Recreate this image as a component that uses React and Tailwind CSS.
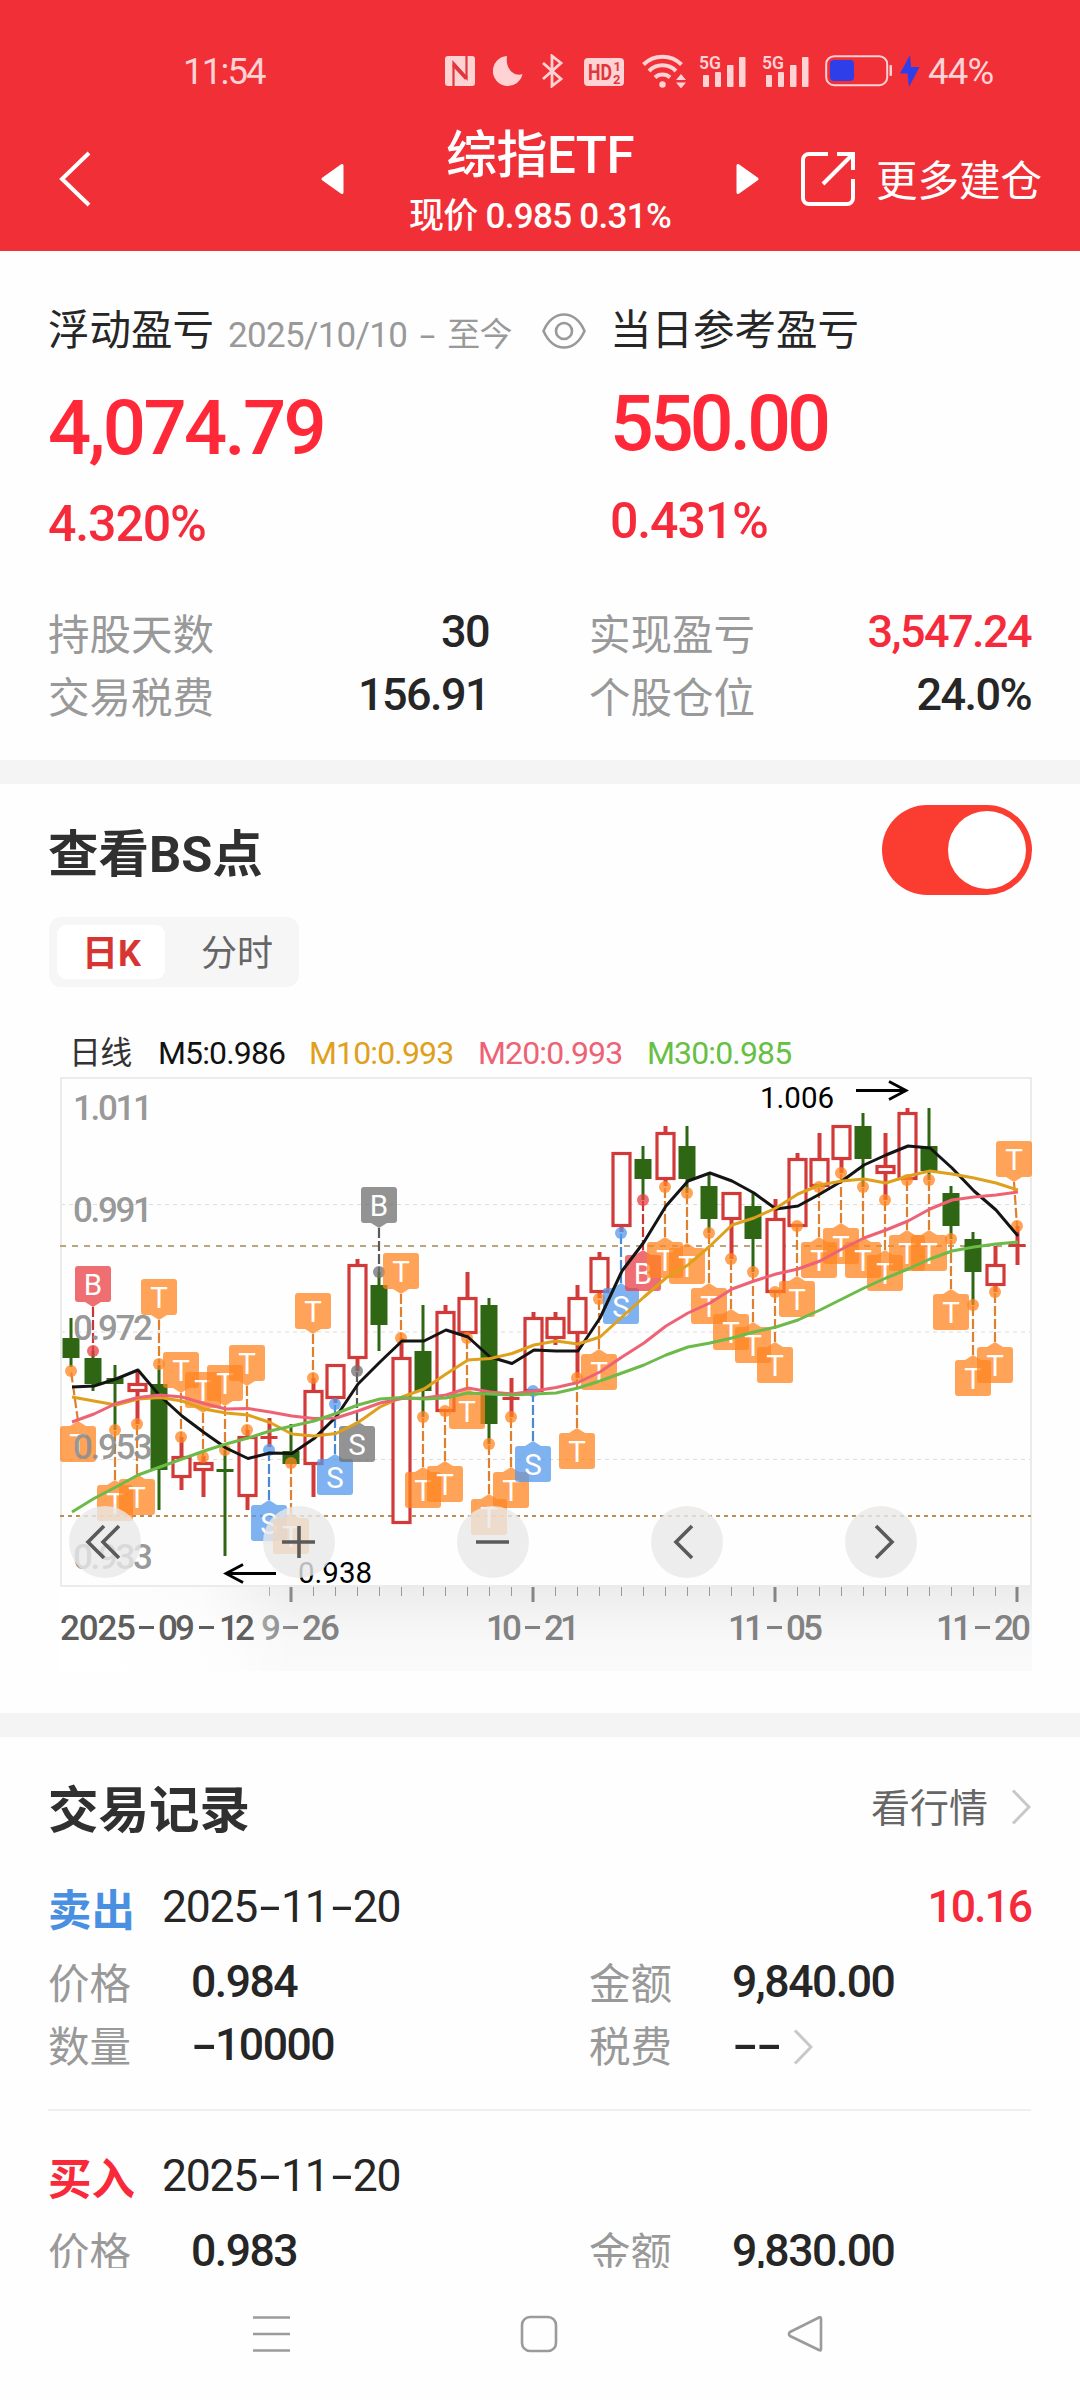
import React, { useState } from "react";

// [high, bodyTop, bodyBottom, low, up, mark, markSide, dotY]
const candles = [
  [1318, 1338, 1358, 1367, 0, "T", "below", 1371],
  [1351, 1358, 1384, 1391, 0, "B", "above", 1351],
  [1365, 1378, 1384, 1430, 0, "T", "below", 1430],
  [1371, 1383, 1392, 1424, 1, "T", "below", 1424],
  [1365, 1384, 1470, 1510, 0, "T", "above", 1364],
  [1437, 1456, 1478, 1490, 1, "T", "above", 1437],
  [1456, 1462, 1471, 1497, 1, "T", "above", 1457],
  [1450, 1469, 1471, 1556, 0, "T", "above", 1450],
  [1430, 1436, 1497, 1510, 1, "T", "above", 1430],
  [1418, 1436, 1438, 1447, 1, "S", "below", 1450],
  [1424, 1451, 1464, 1464, 0, "T", "below", 1463],
  [1378, 1390, 1465, 1497, 1, "T", "above", 1378],
  [1364, 1364, 1399, 1403, 1, "S", "below", 1404],
  [1259, 1264, 1359, 1371, 1, "s", "below", 1371],
  [1272, 1285, 1325, 1351, 0, "b", "above", 1272],
  [1338, 1357, 1524, 1524, 1, "T", "above", 1338],
  [1305, 1351, 1391, 1417, 0, "T", "below", 1417],
  [1305, 1311, 1412, 1412, 1, "T", "below", 1411],
  [1272, 1297, 1334, 1338, 1, "T", "below", 1338],
  [1298, 1305, 1424, 1444, 0, "T", "below", 1444],
  [1378, 1397, 1399, 1417, 1, "T", "below", 1417],
  [1312, 1317, 1392, 1392, 1, "S", "below", 1391],
  [1312, 1317, 1339, 1345, 1, null, null, 0],
  [1285, 1297, 1334, 1378, 1, "T", "below", 1378],
  [1252, 1257, 1293, 1298, 1, "T", "below", 1299],
  [1152, 1152, 1227, 1232, 1, "S", "below", 1233],
  [1146, 1159, 1179, 1200, 0, "R", "below", 1200],
  [1126, 1132, 1180, 1186, 1, "T", "below", 1187],
  [1126, 1146, 1179, 1193, 0, "T", "below", 1193],
  [1173, 1186, 1219, 1233, 0, "T", "below", 1233],
  [1192, 1192, 1220, 1259, 1, "T", "below", 1259],
  [1192, 1206, 1239, 1272, 0, "T", "below", 1272],
  [1199, 1218, 1293, 1293, 1, "T", "below", 1292],
  [1153, 1158, 1227, 1227, 1, "T", "below", 1226],
  [1133, 1158, 1187, 1187, 1, "T", "below", 1187],
  [1125, 1125, 1160, 1173, 1, "T", "below", 1173],
  [1113, 1126, 1159, 1187, 0, "T", "below", 1187],
  [1133, 1165, 1174, 1200, 1, "T", "below", 1200],
  [1108, 1112, 1180, 1180, 1, "T", "below", 1180],
  [1108, 1146, 1171, 1180, 0, "T", "below", 1180],
  [1186, 1193, 1226, 1239, 0, "T", "below", 1239],
  [1232, 1239, 1272, 1305, 0, "T", "below", 1305],
  [1246, 1264, 1286, 1292, 1, "T", "below", 1292],
  [1226, 1244, 1246, 1265, 1, "T", "above", 1226],
];

const averages = [
  {
    color: "#141414",
    values: [
      1387, 1386, 1379, 1370, 1396, 1416, 1432.5, 1448, 1458.5, 1453, 1453.5,
      1438.6, 1417, 1384, 1362, 1341, 1341, 1330, 1337, 1357, 1363.5, 1350,
      1351, 1351, 1318, 1271, 1242, 1206, 1181, 1173, 1181, 1193, 1209, 1206,
      1194, 1181, 1165, 1155, 1146, 1148, 1168, 1191, 1210, 1236,
    ],
  },
  {
    color: "#dfa01c",
    values: [
      1397, 1401, 1405, 1399, 1397.5, 1401, 1409, 1413, 1415, 1422.5, 1434,
      1436, 1433.5, 1422.5, 1407, 1397, 1389, 1374, 1360, 1358.5, 1353.5, 1345,
      1341, 1344, 1337, 1317, 1297, 1278, 1265, 1246, 1225, 1218, 1208, 1194,
      1185, 1181, 1179, 1183, 1176, 1171, 1174, 1178, 1183, 1190,
    ],
  },
  {
    color: "#ee6275",
    values: [
      1422, 1414, 1403.5, 1397.5, 1395, 1397, 1403.5, 1409, 1408.5, 1412, 1416,
      1418.5, 1418, 1411, 1403, 1398.5, 1398, 1395, 1388, 1392, 1394, 1391,
      1387.5, 1382.5, 1372, 1357, 1343, 1326, 1313, 1303, 1289, 1281, 1274,
      1269, 1261, 1249, 1238, 1230, 1221, 1209, 1200, 1197, 1195, 1192,
    ],
  },
  {
    color: "#6cba4a",
    values: [
      1512, 1498.5, 1487, 1475, 1467, 1459, 1451, 1444, 1438, 1431, 1426, 1421,
      1413.5, 1405, 1399, 1397.5, 1399, 1398, 1393, 1394, 1395, 1394, 1393,
      1388, 1381, 1373, 1365, 1355, 1347, 1343, 1338, 1332, 1327, 1320, 1310,
      1299, 1288, 1278, 1269, 1259, 1251, 1247, 1244, 1242,
    ],
  },
];

const markStyles = {
  T: { letter: "T", fill: "#ff8420", line: "#e0802f" },
  S: { letter: "S", fill: "#5498ec", line: "#4a8ad4" },
  B: { letter: "B", fill: "#e83e42", line: "#cc3333" },
  R: { letter: "B", fill: "#e83e42", line: "#cc3333" },
  s: { letter: "S", fill: "#6f6f6f", line: "#5a5a5a" },
  b: { letter: "B", fill: "#6f6f6f", line: "#5a5a5a" },
};

const candleX = (i) => 71 + i * 22;
const pinX = (i) => (i === 0 ? 78 : i === 43 ? 1014 : candleX(i));

// Wide hyphens, as wide as a digit
const Num = ({ children }) =>
  children.split(/(-)/).map((part, i) =>
    part === "-" ? (
      <span key={i} className="inline-block w-[0.54em] scale-x-[1.7] text-center">
        -
      </span>
    ) : (
      part
    )
  );

const Signal = () => (
  <svg width="47" height="38" viewBox="0 -2 47 38" fill="#ffd2d4">
    <text x="0" y="14.5" fontSize="19" fontWeight="600" textLength="22" lengthAdjust="spacingAndGlyphs">
      5G
    </text>
    <rect x="4" y="21" width="6" height="12" rx="1" />
    <rect x="16" y="18" width="6" height="15" rx="1" />
    <rect x="28" y="11" width="6.5" height="22" rx="1" />
    <rect x="40" y="3" width="6.5" height="30" rx="1" />
  </svg>
);

const StatusBar = () => (
  <div className="flex h-[50px] items-center text-[36.500px] leading-[50px] text-[#ffd2d4]">
    <div className="ml-[183px] w-[262px] pt-[2px] tracking-[-0.05em]">11:54</div>
    <svg width="30" height="30" viewBox="0 0 30 30">
      <rect width="30" height="30" rx="3" fill="#ffd2d4" />
      <path d="M8.500 30V7l13 15V0" fill="none" stroke="#e2363d" strokeWidth="2.200" />
      <path d="M8.500 8.500l13 14" stroke="#e2363d" strokeWidth="4" />
    </svg>
    <svg className="ml-[18px]" width="30" height="30" viewBox="0 0 30 30">
      <path d="M14 0A15 15 0 1 0 29.500 18C22 21 12 14 14 0Z" fill="#ffd2d4" />
    </svg>
    <svg className="ml-[19px]" width="22" height="34" viewBox="0 0 22 34" fill="none" stroke="#ffd2d4" strokeWidth="2.800">
      <path d="M1 9l18 16-9 7V2l9 7L1 25" />
    </svg>
    <svg className="ml-[20px]" width="40" height="34" viewBox="0 0 40 34">
      <rect y="4" width="40" height="28" rx="4" fill="#ffd2d4" />
      <g fill="#e2363d" fontWeight="700">
        <text x="4" y="26" fontSize="22" textLength="24" lengthAdjust="spacingAndGlyphs">HD</text>
        <text x="29.500" y="17" fontSize="13">1</text>
        <text x="29" y="29.500" fontSize="13">2</text>
      </g>
    </svg>
    <svg className="ml-[18px]" width="44" height="34" viewBox="0 0 44 34" fill="none" stroke="#ffd2d4" strokeWidth="4">
      <path d="M1.500 10.500a27 27 0 0 1 38 0M7 17a19 19 0 0 1 27 0M13 23.500a11 11 0 0 1 15 0" />
      <circle cx="20.500" cy="30.500" r="3.200" fill="#ffd2d4" stroke="none" />
      <path d="M34 26l5-6 5 6zM34 28.500l5 6 5-6z" fill="#ffd2d4" stroke="none" />
    </svg>
    <div className="ml-[13px] flex gap-[16px]">
      <Signal />
      <Signal />
    </div>
    <svg className="ml-[16px]" width="68" height="32" viewBox="0 0 68 32">
      <rect x="1.200" y="1.200" width="61" height="29" rx="8" fill="none" stroke="#ffd2d4" strokeWidth="2" />
      <rect x="5" y="5" width="24" height="21" rx="4" fill="#2e3fea" />
      <rect x="64.500" y="10" width="2.500" height="11" rx="1" fill="#ffd2d4" />
    </svg>
    <svg className="ml-[7px]" width="20" height="32" viewBox="0 0 20 32">
      <path d="M10 0L0 18.500h7.500L9 32l10.500-20H11z" fill="#2e3fea" />
    </svg>
    <div className="ml-[8px] pt-[2px] tracking-[-0.02em]">44%</div>
  </div>
);

const Header = () => (
  <div className="h-[251px] bg-[#f12f37] pt-[46px] text-white">
    <StatusBar />
    <div className="flex h-[155px] items-center pt-[10px]">
      <svg className="ml-[58px]" width="34" height="56" viewBox="0 0 34 56" fill="none" stroke="#fff" strokeWidth="4">
        <path d="M31 2L4 28l27 26" />
      </svg>
      <svg className="ml-[229px]" width="24" height="30" viewBox="0 0 24 30">
        <path d="M21 1.500v27L2 15z" fill="#fff" stroke="#fff" strokeWidth="3" strokeLinejoin="round" />
      </svg>
      <div className="mt-[8px] w-[390px] text-center font-medium">
        <div className="text-[51px] leading-[60px] tracking-[-0.01em]">综指ETF</div>
        <div className="mt-[9px] text-[35px] leading-[44px] tracking-[-0.02em]">现价 0.985 0.31%</div>
      </div>
      <svg width="24" height="30" viewBox="0 0 24 30">
        <path d="M3 1.500v27L22 15z" fill="#fff" stroke="#fff" strokeWidth="3" strokeLinejoin="round" />
      </svg>
      <svg className="ml-[42px]" width="54" height="54" viewBox="0 0 54 54" fill="none" stroke="#fff" strokeWidth="4">
        <path d="M27 2H8a6 6 0 0 0-6 6v38a6 6 0 0 0 6 6h38a6 6 0 0 0 6-6V27" />
        <path d="M36 2h16v16M52 2L22 32" />
      </svg>
      <div className="ml-[21px] pt-[7px] text-[41.500px] leading-[60px]">更多建仓</div>
    </div>
  </div>
);

const Stat = ({ label, value, red }) => (
  <div className="flex h-[63px] items-center justify-between">
    <span className="pt-[9px] text-[41.500px] text-[#999]">{label}</span>
    <span className={`text-[45px] font-medium tracking-[-0.035em] ${red ? "text-[#f52b3b]" : "text-[#262626]"}`}>
      {value}
    </span>
  </div>
);

const Summary = () => (
  <div className="h-[509px] pr-[49px] pl-[48px] pt-[50px]">
    <div className="flex">
      <div className="w-[562px]">
        <div className="flex h-[60px] items-center">
          <span className="text-[41.500px] text-[#262626]">浮动盈亏</span>
          <span className="ml-[14px] flex pt-[10px] text-[35px] tracking-[-0.02em] text-[#999]">
            2025/10/10
            <span className="mx-[10px] inline-block w-[20px] scale-x-[1.600] text-center">-</span>
            <span className="text-[33px]">至今</span>
          </span>
          <svg className="ml-[30px]" width="44" height="36" viewBox="0 0 44 36" fill="none" stroke="#999" strokeWidth="2.600">
            <path d="M1.500 18C11-4 33-4 42.500 18C33 40 11 40 1.500 18Z" />
            <circle cx="22" cy="18" r="8" />
          </svg>
        </div>
        <div className="mt-[22px] h-[90px] text-[76px] leading-[90px] font-medium tracking-[-0.035em] text-[#ff2838]">4,074.79</div>
        <div className="mt-[20px] h-[60px] text-[50px] leading-[62px] font-medium tracking-[-0.022em] text-[#f52b3b]">4.320%</div>
      </div>
      <div>
        <div className="h-[60px] text-[41.500px] leading-[60px] text-[#262626]">当日参考盈亏</div>
        <div className="mt-[18px] h-[90px] text-[77px] leading-[90px] font-medium tracking-[-0.05em] text-[#ff2838]">550.00</div>
        <div className="mt-[21px] h-[60px] text-[50px] leading-[62px] font-medium tracking-[-0.022em] text-[#f52b3b]">0.431%</div>
      </div>
    </div>
    <div className="mt-[47px] grid grid-cols-[441px_442px] gap-x-[100px]">
      <Stat label="持股天数" value="30" />
      <Stat label="实现盈亏" value="3,547.24" red />
      <Stat label="交易税费" value="156.91" />
      <Stat label="个股仓位" value="24.0%" />
    </div>
  </div>
);

const Candle = ({ data, x }) => {
  const [high, top, bottom, low, up] = data;
  const color = up ? "#d23a3a" : "#2f6613";
  if (bottom - top < 4) {
    return (
      <g fill={color}>
        <rect x={x - 8.5} y={top} width="17" height="3" />
        <rect x={x - 1.5} y={high} width={up ? 4 : 3} height={low - high} />
      </g>
    );
  }
  return (
    <g>
      <rect x={x - 1.5} y={high} width={up ? 4 : 3} height={top - high} fill={color} />
      <rect x={x - 1.5} y={bottom} width={up ? 4 : 3} height={low - bottom} fill={color} />
      {up ? (
        <rect x={x - 8} y={top + 1.5} width="17" height={bottom - top - 3} fill="#fff" stroke={color} strokeWidth="3.2" />
      ) : (
        <rect x={x - 8.5} y={top} width="17" height={bottom - top} fill={color} />
      )}
    </g>
  );
};

const Pin = ({ data, i }) => {
  const [, , , , , mark, side, dot] = data;
  if (!mark) return null;
  const style = markStyles[mark];
  const x = pinX(i);
  const above = side === "above";
  const top = above ? dot - 85 : dot + 55;
  const tip = above ? top + 41 : top - 5;
  const edge = above ? top + 36 : top;
  return (
    <g>
      <line x1={x} y1={tip} x2={candleX(i)} y2={dot} stroke={style.line} strokeWidth="2.2" strokeDasharray="10 3" />
      <g fill={style.fill} fillOpacity="0.75">
        <circle cx={candleX(i)} cy={dot} r="6" />
        <path d={`M${x - 8} ${edge}L${x} ${tip}L${x + 8} ${edge}Z`} />
        <rect x={x - 18} y={top} width="36" height="36" rx="3" />
      </g>
      <text x={x} y={top + 28.5} fontSize="29.5" textAnchor="middle" fill="#fff">
        {style.letter}
      </text>
    </g>
  );
};

const priceLabels = [
  ["1.011", 1120],
  ["0.991", 1222],
  ["0.972", 1340],
  ["0.953", 1459],
  ["0.933", 1569],
];

const Chart = () => (
  <svg className="block" width="972" height="594" viewBox="60 1077 972 594">
    <defs>
      <linearGradient id="axis" x1="0" y1="0" x2="0" y2="1">
        <stop offset="0" stopColor="#ececec" />
        <stop offset="0.6" stopColor="#f8f8f8" />
        <stop offset="1" stopColor="#fafafa" />
      </linearGradient>
      <linearGradient id="fade">
        <stop offset="0" stopColor="#fff" />
        <stop offset="0.6" stopColor="#fff" stopOpacity="0.8" />
        <stop offset="1" stopColor="#fff" stopOpacity="0" />
      </linearGradient>
    </defs>
    <rect x="60" y="1587" width="972" height="84" fill="url(#axis)" />
    <g fill="none" strokeWidth="1" stroke="#dcdcdc" strokeDasharray="4 4">
      <path d="M61 1204.500H1031M61 1332H1031M61 1459.500H1031" />
    </g>
    <rect x="61" y="1078" width="970" height="508" fill="none" stroke="#ebebeb" strokeWidth="2" />
    <path d="M60 1246H1031" stroke="#b8a681" strokeWidth="2" strokeDasharray="6 6" />
    <path d="M60 1516H1031" stroke="#bd8d56" strokeWidth="2" strokeDasharray="4 4" />

    {candles.map((c, i) => (
      <Candle key={i} data={c} x={candleX(i)} />
    ))}
    {candles.map((c, i) => (
      <Pin key={i} data={c} i={i} />
    ))}
    {averages.map((a) => (
      <polyline
        key={a.color}
        points={a.values.map((y, i) => `${candleX(i) + 1},${y}`).join(" ")}
        fill="none"
        stroke={a.color}
        strokeWidth="3"
        strokeLinejoin="round"
      />
    ))}

    {priceLabels.map(([text, y]) => (
      <text key={text} x="73" y={y} fontSize="35" fontWeight="500" fill="#8f8f8f" fillOpacity="0.92" textLength="80">
        {text}
      </text>
    ))}

    <g fill="none" stroke="#000" strokeWidth="2.800">
      <path d="M856 1090.500H906M889 1081.500L906 1090.500L889 1099.500" />
      <path d="M276 1573.500H226M243 1564.500L226 1573.500L243 1582.500" />
    </g>
    <text x="760" y="1108" fontSize="29.500">1.006</text>
    <text x="298" y="1582.500" fontSize="29.500">0.938</text>

    {candles.map((c, i) =>
      i < 9 ? null : (i - 10) % 11 === 0 ? (
        <rect key={i} x={candleX(i) - 1.5} y="1587" width="3" height="15" fill="#858585" />
      ) : (
        <rect key={i} x={candleX(i)} y="1587" width="1" height="9" fill="#999" />
      )
    )}
    <g fontSize="35" fontWeight="500" fill="#828282">
      <text x="261" y="1640" textLength="19">9</text>
      <text x="302" y="1640" textLength="38">26</text>
      <text x="486" y="1640" textLength="36">10</text>
      <text x="544" y="1640" textLength="36">21</text>
      <text x="728" y="1640" textLength="36">11</text>
      <text x="786" y="1640" textLength="37">05</text>
      <text x="936" y="1640" textLength="36">11</text>
      <text x="994" y="1640" textLength="37">20</text>
    </g>
    <path d="M283 1627.500h15M525 1627.500h15M767 1627.500h15M975 1627.500h15" stroke="#828282" strokeWidth="3" />
    <rect x="60" y="1587" width="235" height="84" fill="url(#fade)" />
    <g fontSize="35" fontWeight="500" fill="#5e5e5e">
      <text x="60" y="1640" textLength="76">2025</text>
      <text x="158" y="1640" textLength="37">09</text>
      <text x="219" y="1640" textLength="36">12</text>
    </g>
    <path d="M139 1627.500h15M199 1627.500h15" stroke="#5e5e5e" strokeWidth="3" />
  </svg>
);

const controls = [
  "M35 -14l-16 16 16 16M50 -14l-16 16 16 16",
  "M19 2h33M36 -14v32",
  "M19 2h33",
  "M41 -14l-16 16 16 16",
  "M31 -14l16 16-16 16",
];

const ChartControls = () => (
  <div className="absolute top-[429px] left-[9px] flex gap-[122px]">
    {controls.map((d) => (
      <button key={d} className="h-[72px] w-[72px] rounded-full bg-[#e8e8e8]/80">
        <svg width="72" height="72" viewBox="0 -34 72 72" fill="none" stroke="#5a5a5a" strokeWidth="3.600">
          <path d={d} />
        </svg>
      </button>
    ))}
  </div>
);

const BSPoints = () => {
  const [show, setShow] = useState(true);
  return (
    <div className="h-[929px] px-[49px] pt-[21px]">
      <div className="flex h-[90px] items-center justify-between">
        <h2 className="-ml-px pt-[9px] text-[50.500px] font-bold text-[#303030]">查看BS点</h2>
        <button
          onClick={() => setShow(!show)}
          className="-mr-px flex h-[90px] w-[150px] items-center justify-end rounded-full bg-[#fb3c31] px-[6px]"
        >
          <span className="h-[78px] w-[78px] rounded-full bg-white" />
        </button>
      </div>
      <div className="mt-[22px] flex h-[70px] w-[250px] items-center rounded-[12px] bg-[#f6f6f6] pl-[8px] text-[36px] leading-[58px]">
        <div className="h-[54px] w-[108px] rounded-[9px] bg-white pl-px text-center font-bold text-[#d63531]">日K</div>
        <div className="h-[54px] w-[134px] pl-[10px] text-center text-[#666]">分时</div>
      </div>
      <div className="mt-[42px] flex h-[48px] items-center pl-[20px] text-[32px] leading-[48px] tracking-[-0.027em]">
        <span className="w-[89px] text-[#333]">日线</span>
        <span className="w-[151px] text-[#111]">M5:0.986</span>
        <span className="w-[169px] text-[#dfa01c]">M10:0.993</span>
        <span className="w-[169px] text-[#ee6275]">M20:0.993</span>
        <span className="text-[#67bf45]">M30:0.985</span>
      </div>
      {show && (
        <div className="relative ml-[11px]">
          <Chart />
          <ChartControls />
        </div>
      )}
    </div>
  );
};

const Chevron = () => (
  <svg width="20" height="36" viewBox="0 0 20 36" fill="none" stroke="#c8c8c8" strokeWidth="3">
    <path d="M2 1.500L18 18 2 34.500" />
  </svg>
);

const Field = ({ label, value, arrow }) => (
  <div className="flex h-[63px] items-center">
    <span className="w-[143px] pt-[4px] text-[41.500px] text-[#999]">{label}</span>
    <span className="pb-[3px] text-[44.500px] font-medium tracking-[-0.033em] text-[#262626]">
      <Num>{value}</Num>
    </span>
    {arrow && (
      <span className="ml-[13px]">
        <Chevron />
      </span>
    )}
  </div>
);

const trades = [
  { id: 1, type: "卖出", date: "2025-11-20", profit: "10.16", price: "0.984", amount: "9,840.00", count: "-10000", fee: "--" },
  { id: 2, type: "买入", date: "2025-11-20", price: "0.983", amount: "9,830.00" },
];

const Trade = ({ trade }) => (
  <div className="h-[269px] border-b-2 border-[#f0f0f0] pt-[36px]">
    <div className="flex h-[64px] items-center text-[44.500px] tracking-[-0.028em]">
      <span
        className={`w-[114px] pt-[3px] text-[43.500px] font-bold tracking-normal ${
          trade.type === "卖出" ? "text-[#4a90e2]" : "text-[#f9293a]"
        }`}
      >
        {trade.type}
      </span>
      <span className="flex-1 pb-[5px] text-[#262626]">
        <Num>{trade.date}</Num>
      </span>
      <span className="pb-[5px] font-medium tracking-[-0.045em] text-[#f52b3b]">{trade.profit}</span>
    </div>
    <div className="mt-[10px] grid grid-cols-[541px_1fr]">
      <Field label="价格" value={trade.price} />
      <Field label="金额" value={trade.amount} />
      {trade.count && <Field label="数量" value={trade.count} />}
      {trade.fee && <Field label="税费" value={trade.fee} arrow />}
    </div>
  </div>
);

const Records = () => (
  <div className="h-[531px] overflow-hidden pr-[49px] pl-[48px] pt-[41px]">
    <div className="flex h-[64px] items-center">
      <h2 className="flex-1 pt-px text-[50.500px] font-bold text-[#303030]">交易记录</h2>
      <span className="mr-[23px] pb-[2px] text-[39px] text-[#666]">看行情</span>
      <span className="pb-[6px]">
        <Chevron />
      </span>
    </div>
    {trades.map((trade) => (
      <Trade key={trade.id} trade={trade} />
    ))}
  </div>
);

const NavBar = () => (
  <div className="flex h-[132px] items-start bg-[#fefefe] pt-[47px]">
    <svg className="ml-[253px]" width="37" height="38" viewBox="0 0 37 38" stroke="#9b9b9b" strokeWidth="2.600">
      <path d="M0 2.500h37M0 19h37M0 35.500h37" />
    </svg>
    <svg className="ml-[230px]" width="38" height="38" viewBox="0 0 38 38" fill="none" stroke="#9b9b9b" strokeWidth="2.600">
      <rect x="2" y="2" width="34" height="34" rx="8" />
    </svg>
    <svg className="ml-[229px]" width="36" height="38" viewBox="0 0 36 38" fill="none" stroke="#9b9b9b" strokeWidth="2.600" strokeLinejoin="round">
      <path d="M33 2.500Q34 2 34 4v30Q34 36 32 35L3 21Q1 19 3 17L31 3Q32 2 33 2.500Z" />
    </svg>
  </div>
);

const App = () => {
  return (
    <div className="h-[2400px] w-[1080px] overflow-hidden bg-[#fefefe] font-[Roboto,'Noto_Sans_CJK_SC',sans-serif]">
      <Header />
      <Summary />
      <div className="h-[24px] bg-[#f4f4f4]" />
      <BSPoints />
      <div className="h-[24px] bg-[#f4f4f4]" />
      <Records />
      <NavBar />
    </div>
  );
};

export default App;
